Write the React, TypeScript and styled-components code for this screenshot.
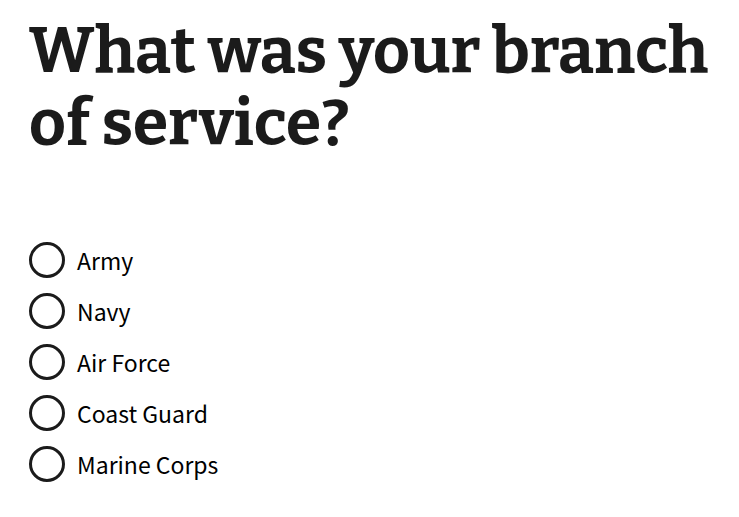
import React from "react";
import styled, { createGlobalStyle } from "styled-components";

const GlobalStyle = createGlobalStyle`
  *, *::before, *::after { box-sizing: border-box; }
  body {
    margin: 0;
    background: #ffffff;
    color: #1b1b1b;
    font-family: "Noto Sans CJK SC", "Open Sans", sans-serif;
  }
`;

const Form = styled.form`
  padding: 16px 24px 24px 29px;
`;

const Fieldset = styled.fieldset`
  margin: 0;
  padding: 0;
  border: 0;
  min-width: 0;
`;

const Question = styled.legend`
  padding: 0;
  margin: 0 0 82px;
  font-family: Bitter, "DejaVu Serif", "Liberation Serif", serif;
  font-size: 64px;
  font-weight: 700;
  line-height: 72px;
`;

const Options = styled.div`
  display: flex;
  flex-direction: column;
  gap: 15px;
`;

const Option = styled.label`
  display: flex;
  align-items: center;
  gap: 12px;
  color: #000000;
  font-size: 23px;
  line-height: 36px;
  cursor: pointer;
`;

const Radio = styled.input`
  appearance: none;
  flex: none;
  width: 36px;
  height: 36px;
  margin: 0;
  border: 3px solid #1b1b1b;
  border-radius: 50%;
  background: #ffffff;

  &:checked {
    background: #1b1b1b;
    box-shadow: inset 0 0 0 4px #ffffff;
  }
`;

const branches = ["Army", "Navy", "Air Force", "Coast Guard", "Marine Corps"];

export default function App() {
  return (
    <>
      <GlobalStyle />
      <Form>
        <Fieldset>
          <Question>What was your branch of service?</Question>
          <Options>
            {branches.map((branch) => (
              <Option key={branch}>
                <Radio type="radio" name="branch" value={branch} />
                {branch}
              </Option>
            ))}
          </Options>
        </Fieldset>
      </Form>
    </>
  );
}
